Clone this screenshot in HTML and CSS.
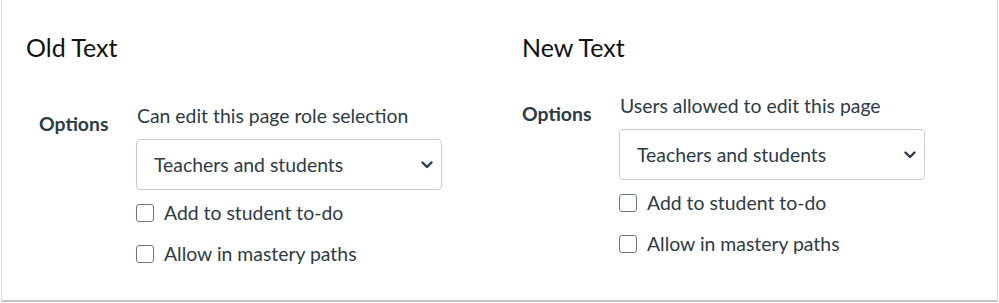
FILE: index.html
```html
<!DOCTYPE html>
<html lang="en">
<head>
    <meta charset="UTF-8">
    <meta name="viewport" content="width=device-width, initial-scale=1.0">
    <title>Page options: old and new text</title>
    <link rel="stylesheet" href="styles.css">
</head>
<body>
    <div class="panel">
        <div class="column old">
            <h2>Old Text</h2>
            <div class="options-row">
                <div class="options-label">Options</div>
                <div class="fields">
                    <div class="field-label">Can edit this page role selection</div>
                    <div class="select">
                        <span>Teachers and students</span>
                        <svg class="chevron" width="12" height="8" viewBox="0 0 12 8"><path d="M1.5 1.5 L6 6 L10.5 1.5" fill="none" stroke="#2d3b45" stroke-width="2.4" stroke-linecap="round" stroke-linejoin="round"/></svg>
                    </div>
                    <label class="check"><span class="box"></span>Add to student to-do</label>
                    <label class="check"><span class="box"></span>Allow in mastery paths</label>
                </div>
            </div>
        </div>
        <div class="column new">
            <h2>New Text</h2>
            <div class="options-row">
                <div class="options-label">Options</div>
                <div class="fields">
                    <div class="field-label">Users allowed to edit this page</div>
                    <div class="select">
                        <span>Teachers and students</span>
                        <svg class="chevron" width="12" height="8" viewBox="0 0 12 8"><path d="M1.5 1.5 L6 6 L10.5 1.5" fill="none" stroke="#2d3b45" stroke-width="2.4" stroke-linecap="round" stroke-linejoin="round"/></svg>
                    </div>
                    <label class="check"><span class="box"></span>Add to student to-do</label>
                    <label class="check"><span class="box"></span>Allow in mastery paths</label>
                </div>
            </div>
        </div>
    </div>
</body>
</html>
```

FILE: styles.css
```css
* {
    margin: 0;
    padding: 0;
    box-sizing: border-box;
}
body {
    background-color: white;
    font-family: Lato, "Noto Sans", sans-serif;
    color: #2d3b45;
}
.panel {
    display: grid;
    grid-template-columns: 496px 470px;
    height: 302px;
    margin-left: 1px;
    width: 997px;
    padding-left: 24px;
    border-left: 1px solid #e2e2e2;
    border-right: 1px solid #d6d6d6;
    border-bottom: 2px solid #c4c4c4;
}
h2 {
    font-size: 25px;
    font-weight: 400;
    color: #111;
    line-height: 30px;
    padding-top: 32px;
}
.options-row {
    display: flex;
}
.old .options-row {
    margin-top: 42px;
    padding-left: 13px;
}
.new .options-row {
    margin-top: 32px;
}
.options-label {
    width: 97px;
    font-size: 19.4px;
    font-weight: 700;
    padding-top: 8px;
    line-height: 24px;
}
.field-label {
    font-size: 19.4px;
    line-height: 24px;
    margin-bottom: 11px;
    padding-left: 1px;
}
.select {
    display: flex;
    align-items: center;
    justify-content: space-between;
    width: 306px;
    height: 51px;
    border: 1px solid #c7cdd1;
    border-radius: 4px;
    padding: 0 8px 0 17px;
    font-size: 19.4px;
}
.check {
    display: flex;
    align-items: center;
    gap: 10px;
    font-size: 19.4px;
    line-height: 24px;
    margin-top: 11px;
}
.check + .check {
    margin-top: 17px;
}
.box {
    width: 18px;
    height: 18px;
    border: 1px solid #6b7780;
    border-radius: 3px;
}
```
